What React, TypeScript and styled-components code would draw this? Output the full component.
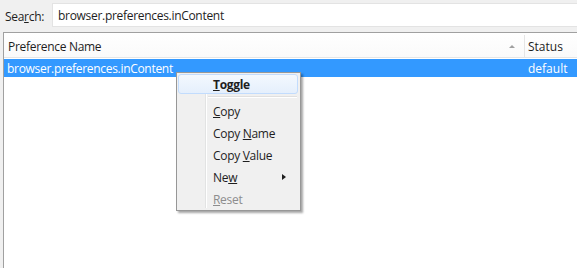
import React from "react"
import styled, { createGlobalStyle } from "styled-components"

const GlobalStyle = createGlobalStyle`
  html, body {
    margin: 0;
    padding: 0;
    background: #f0f0f0;
  }
  body {
    font-family: "Open Sans", "Noto Sans", "DejaVu Sans", sans-serif;
    font-size: 12px;
    color: #1e1e1e;
  }
`

const Page = styled.div`
  position: relative;
  width: 577px;
  height: 268px;
  overflow: hidden;
  background: #f0f0f0;
  display: flex;
  flex-direction: column;
`

const SearchBar = styled.div`
  height: 32px;
  display: flex;
  align-items: center;
  padding-left: 5px;
  box-sizing: border-box;
`

const Label = styled.label`
  width: 47px;
  letter-spacing: -0.3px;
  u { text-decoration: underline; }
`

const SearchInput = styled.div`
  flex: 1;
  height: 22px;
  margin-top: -2px;
  background: #fff;
  border: 1px solid #e3e3e3;
  border-right: none;
  display: flex;
  align-items: center;
  padding-left: 5px;
  letter-spacing: -0.3px;
`

const ListPanel = styled.div`
  flex: 1;
  margin-left: 3px;
  background: #fff;
  border-left: 1px solid #a0a0a0;
  border-top: 1px solid #a0a0a0;
  display: flex;
  flex-direction: column;
`

const Header = styled.div`
  height: 25px;
  padding-top: 2px;
  box-sizing: border-box;
  display: flex;
  align-items: center;
  background: linear-gradient(#ffffff, #fafafa);
  border-bottom: 1px solid #e5e5e5;
`

const NameCol = styled.div`
  flex: 1;
  padding-left: 4px;
  letter-spacing: -0.3px;
`

const SortArrow = styled.div`
  width: 0;
  height: 0;
  border-left: 3px solid transparent;
  border-right: 3px solid transparent;
  border-bottom: 3px solid #a0a0a0;
  margin-right: 9px;
`

const ColSep = styled.div`
  width: 1px;
  align-self: stretch;
  background: #e5e5e5;
`

const StatusCol = styled.div<{ $white?: boolean }>`
  width: 49px;
  padding-left: 3px;
  color: ${p => (p.$white ? "#fff" : "inherit")};
`

const Row = styled.div<{ $selected?: boolean }>`
  height: 18px;
  margin-top: 1px;
  display: flex;
  align-items: center;
  background: ${p => (p.$selected ? "#3399ff" : "transparent")};
  color: ${p => (p.$selected ? "#fff" : "inherit")};
`

const RowName = styled.div`
  flex: 1;
  padding-left: 3px;
  letter-spacing: -0.3px;
`

const Menu = styled.div`
  position: absolute;
  left: 176px;
  top: 72px;
  width: 125px;
  height: 139px;
  background: #f0f0f0;
  border: 1px solid #979797;
  box-shadow: 2px 2px 2px rgba(0, 0, 0, 0.35);
  padding: 1px;
  box-sizing: border-box;
  display: flex;
  flex-direction: column;

  &::before {
    content: "";
    position: absolute;
    left: 28px;
    top: 2px;
    bottom: 2px;
    width: 1px;
    background: #e2e3e3;
    box-shadow: 1px 0 0 #ffffff;
  }
`

const MenuItem = styled.div<{ $active?: boolean; $disabled?: boolean; $bold?: boolean }>`
  position: relative;
  z-index: 1;
  flex: none;
  height: ${p => (p.$active ? 20 : 22)}px;
  display: flex;
  align-items: center;
  padding-left: 34px;
  margin-right: 1px;
  border-radius: 3px;
  box-sizing: border-box;
  font-weight: ${p => (p.$bold ? 700 : 400)};
  color: ${p => (p.$disabled ? "#8d8d8d" : "#1e1e1e")};
  border: 1px solid ${p => (p.$active ? "#c2dcfd" : "transparent")};
  background: ${p => (p.$active ? "linear-gradient(#f3f8fe, #e5effc)" : "transparent")};
  letter-spacing: -0.3px;

  u { text-decoration: underline; }
`

const MenuSep = styled.div`
  position: relative;
  z-index: 1;
  flex: none;
  height: 1px;
  margin: 2px 2px 3px 30px;
  background: #e0e0e0;
  box-shadow: 0 1px 0 #ffffff;
`

const SubArrow = styled.div`
  position: absolute;
  right: 11px;
  top: 7px;
  width: 0;
  height: 0;
  border-top: 3.5px solid transparent;
  border-bottom: 3.5px solid transparent;
  border-left: 4px solid #1e1e1e;
`

export default function App() {
  return (
    <Page>
      <GlobalStyle />
      <SearchBar>
        <Label>Sea<u>r</u>ch:</Label>
        <SearchInput>browser.preferences.inContent</SearchInput>
      </SearchBar>
      <ListPanel>
        <Header>
          <NameCol>Preference Name</NameCol>
          <SortArrow />
          <ColSep />
          <StatusCol>Status</StatusCol>
        </Header>
        <Row $selected>
          <RowName>browser.preferences.inContent</RowName>
          <StatusCol $white>default</StatusCol>
        </Row>
      </ListPanel>
      <Menu>
        <MenuItem $active $bold><u>T</u>oggle</MenuItem>
        <MenuSep />
        <MenuItem><u>C</u>opy</MenuItem>
        <MenuItem>Copy&nbsp;<u>N</u>ame</MenuItem>
        <MenuItem>Copy&nbsp;<u>V</u>alue</MenuItem>
        <MenuItem>Ne<u>w</u><SubArrow /></MenuItem>
        <MenuItem $disabled><u>R</u>eset</MenuItem>
      </Menu>
    </Page>
  )
}
